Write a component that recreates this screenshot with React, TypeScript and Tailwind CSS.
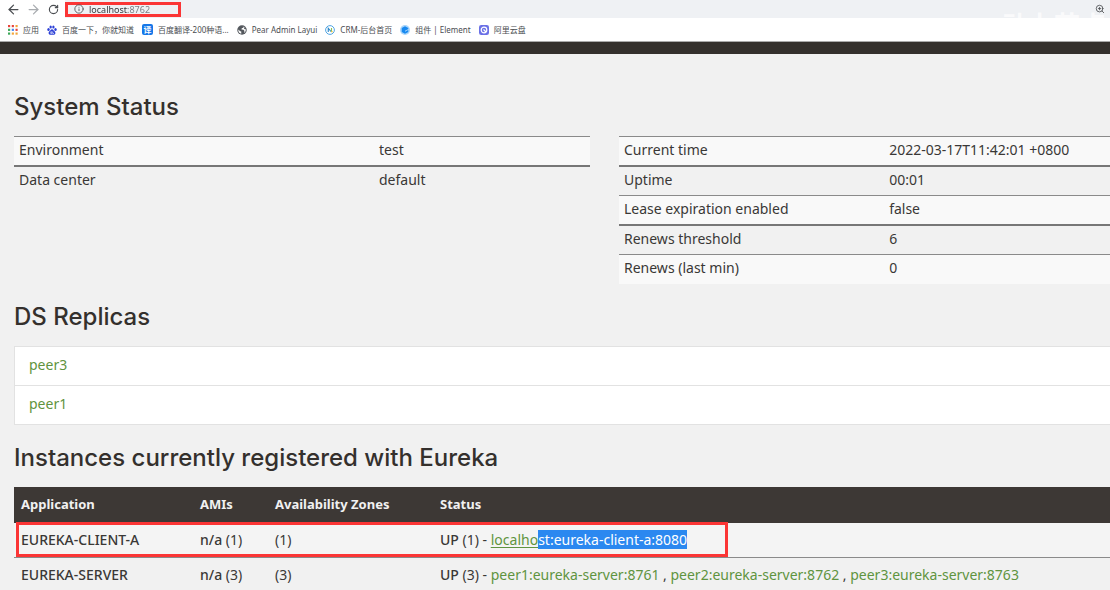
import React from 'react';
import { ArrowLeft, ArrowRight, Info, RotateCw, ZoomIn } from 'lucide-react';

interface Bookmark {
  label: string;
  icon: React.ReactNode;
}

interface Instance {
  app: string;
  count: number;
  status: React.ReactNode;
}

const AppsIcon = () => (
  <svg viewBox="0 0 12 12" className="size-2.5" aria-hidden="true">
    {[
      ['#e8453c', '#e8453c', '#f2a43a'],
      ['#3aa757', '#4285f4', '#e8453c'],
      ['#3aa757', '#f2a43a', '#f2a43a'],
    ].map((row, y) =>
      row.map((fill, x) => (
        <rect key={`${x}-${y}`} x={x * 4.5} y={y * 4.5} width="2.6" height="2.6" fill={fill} />
      ))
    )}
  </svg>
);

const PawIcon = () => (
  <svg viewBox="0 0 20 20" className="size-2.5" fill="#2b3fd6" aria-hidden="true">
    <ellipse cx="3" cy="9" rx="2.4" ry="3" />
    <ellipse cx="7.3" cy="4" rx="2.3" ry="3.2" />
    <ellipse cx="12.8" cy="4" rx="2.3" ry="3.2" />
    <ellipse cx="17" cy="9" rx="2.4" ry="3" />
    <path d="M10 8.5c-2.5 0-3.2 2.6-5 4.2-1.700 1.500-2.200 3-1.500 4.700 1 2.600 3.700 1.900 6.500 1.900s5.500.7 6.500-1.900c.7-1.700.2-3.200-1.500-4.700-1.800-1.600-2.500-4.200-5-4.200z" />
    <path d="M7.500 13.500h2v3.500h-2zM11.500 13v4h2.500" fill="none" stroke="#fff" strokeWidth="1.200" />
  </svg>
);

const TranslateIcon = () => (
  <span className="flex size-[11px] items-center justify-center rounded-xs bg-[#1677e8] text-[8px] leading-none font-bold text-white">
    译
  </span>
);

const GlobeIcon = () => (
  <svg viewBox="0 0 20 20" className="size-2.5" aria-hidden="true">
    <circle cx="10" cy="10" r="9.500" fill="#54585d" />
    <path d="M2.500 9l4 3.500 2 .5v4.500C5 17 2.500 14 2.500 9zM10 2.500l3.500.8-1 2.200-3 1-.5 2.500 4 .5 2 2.500-1 4c2.500-1.500 4-4 3.500-7.500L14 8l1-3.500" fill="#fff" />
  </svg>
);

const CrmIcon = () => (
  <svg viewBox="0 0 20 20" className="size-2.5" aria-hidden="true">
    <circle cx="10" cy="10" r="8.800" fill="#fff" stroke="#3d9be0" strokeWidth="1.800" />
    <path d="M6.500 14V6.500l6 7" fill="none" stroke="#2b87c8" strokeWidth="2.200" />
    <path d="M13 6v7.500" stroke="#8cc152" strokeWidth="2.200" />
    <circle cx="14" cy="13.500" r="1.600" fill="#f4c542" />
  </svg>
);

const ElementIcon = () => (
  <svg viewBox="0 0 20 20" className="size-2.5" aria-hidden="true">
    <circle cx="10" cy="10" r="10" fill="#a9d5fb" />
    <path d="M10 2.500l6.500 3.700v2L10 11.500v2l6.500-3.300v3.600L10 17.500l-6.500-3.700V6.200z" fill="#1789f0" />
  </svg>
);

const DriveIcon = () => (
  <svg viewBox="0 0 20 20" className="size-2.5" aria-hidden="true">
    <rect width="20" height="20" rx="4.500" fill="#6a70e6" />
    <circle cx="10" cy="10" r="5.600" fill="none" stroke="#fff" strokeWidth="2.400" />
    <path d="M9 9l5 5" stroke="#fff" strokeWidth="2.400" />
  </svg>
);

const bookmarks: Bookmark[] = [
  { label: '应用', icon: <AppsIcon /> },
  { label: '百度一下，你就知道', icon: <PawIcon /> },
  { label: '百度翻译-200种语...', icon: <TranslateIcon /> },
  { label: 'Pear Admin Layui', icon: <GlobeIcon /> },
  { label: 'CRM-后台首页', icon: <CrmIcon /> },
  { label: '组件 | Element', icon: <ElementIcon /> },
  { label: '阿里云盘', icon: <DriveIcon /> },
];

const environment = [
  ['Environment', 'test'],
  ['Data center', 'default'],
];

const runtime = [
  ['Current time', '2022-03-17T11:42:01 +0800'],
  ['Uptime', '00:01'],
  ['Lease expiration enabled', 'false'],
  ['Renews threshold', '6'],
  ['Renews (last min)', '0'],
];

const replicas = ['peer3', 'peer1'];

const servers = ['peer1:eureka-server:8761', 'peer2:eureka-server:8762', 'peer3:eureka-server:8763'];

const instances: Instance[] = [
  {
    app: 'EUREKA-CLIENT-A',
    count: 1,
    status: (
      <a href="#client-a" className="text-[#5f9440] underline underline-offset-2">
        localho
        <mark className="inline-block bg-[#2b88f0] leading-[19px] text-white">st:eureka-client-a:8080</mark>
      </a>
    ),
  },
  {
    app: 'EUREKA-SERVER',
    count: 3,
    status: servers.map((name, i) => (
      <React.Fragment key={name}>
        {i > 0 && ' , '}
        <a href={`#${name}`} className="text-[#5f9440]">
          {name}
        </a>
      </React.Fragment>
    )),
  },
];

const BrowserBar = () => (
  <header className="relative bg-white font-['Noto_Sans','Noto_Sans_CJK_SC',sans-serif] text-[#4a4d51]">
    <div className="flex h-[18px] items-center">
      <div className="flex w-[65px] items-center gap-[5px] pl-1.5">
        <button type="button" aria-label="Back" className="flex size-[15px] items-center justify-center">
          <ArrowLeft size={15} />
        </button>
        <button type="button" aria-label="Forward" className="flex size-[15px] items-center justify-center text-[#a9acb0]">
          <ArrowRight size={15} />
        </button>
        <button type="button" aria-label="Reload" className="flex size-[15px] items-center justify-center">
          <RotateCw size={11} strokeWidth={2.5} />
        </button>
      </div>
      <div className="flex h-full flex-1 items-center justify-between bg-[#eff1f4] pr-[5px]">
        <label className="flex h-[15px] w-[116px] items-center gap-[5px] border-[3px] border-[#fb3535] pl-1.5">
          <Info size={10} aria-label="Site information" />
          <input
            type="text"
            aria-label="Address"
            defaultValue="localhost:8762"
            className="w-20 bg-[linear-gradient(90deg,#303236_39px,#777b80_39px)] bg-clip-text text-[9px] leading-none text-transparent outline-none"
          />
        </label>
        <button type="button" aria-label="Zoom">
          <ZoomIn size={10} />
        </button>
      </div>
    </div>
    <nav className="flex h-6 items-center gap-2 border-b border-[#aaa] pl-2 text-[8px]" aria-label="Bookmarks">
      {bookmarks.map(({ label, icon }) => (
        <a key={label} href="#bookmark" className="flex items-center gap-[5px] whitespace-nowrap">
          {icon}
          {label}
        </a>
      ))}
    </nav>
    <span className="pointer-events-none absolute top-3 right-1 text-[26px] leading-none font-bold whitespace-nowrap text-white/70">
      动力节点
    </span>
  </header>
);

const StatusTable = ({ rows, labelWidth }: { rows: string[][]; labelWidth: string }) => (
  <table className="w-full table-fixed self-start text-left">
    <tbody>
      {rows.map(([label, value]) => (
        <tr key={label} className="h-[29px] border-t border-[#8a8a8a] odd:bg-[#f9f9f9] even:h-[30px] even:border-t-2 even:border-[#777]">
          <th scope="row" className={`${labelWidth} pb-0.5 pl-[5px] font-normal`}>
            {label}
          </th>
          <td className="pb-0.5 pl-[5px]">{value}</td>
        </tr>
      ))}
    </tbody>
  </table>
);

const Heading = ({ children }: { children: React.ReactNode }) => (
  <h1 className="mb-[15px] font-['Inter',sans-serif] text-2xl leading-7 font-medium whitespace-nowrap text-[#34302d]">{children}</h1>
);

export default function App() {
  return (
    <div className="min-h-screen overflow-hidden bg-[#f1f1f1] font-['Noto_Sans',sans-serif] text-sm leading-5 text-[#3a3836]">
      <BrowserBar />
      <div className="h-3 bg-[#34302d]" />

      <main className="pl-3.5">
        <section className="pt-[39px]">
          <Heading>System Status</Heading>
          <div className="grid grid-cols-[576fr_491fr] gap-x-[29px]">
            <StatusTable rows={environment} labelWidth="w-5/8" />
            <StatusTable rows={runtime} labelWidth="w-[54%]" />
          </div>
        </section>

        <section className="mt-[19px]">
          <Heading>DS Replicas</Heading>
          <ul className="border-b border-l border-[#e2e2e2] bg-white">
            {replicas.map((name) => (
              <li key={name} className="border-t border-[#e2e2e2] pt-2 pb-2.5 pl-3.5">
                <a href={`#${name}`} className="text-[#5f9440]">
                  {name}
                </a>
              </li>
            ))}
          </ul>
        </section>

        <section className="mt-[19px]">
          <Heading>Instances currently registered with Eureka</Heading>
          <div className="relative">
            <table className="w-full table-fixed text-left whitespace-nowrap">
              <thead className="bg-[#3d3835] text-[13px] text-[#f1f1f1]">
                <tr className="h-9">
                  <th className="w-[179px] pb-0.5 pl-[7px]">Application</th>
                  <th className="w-[75px] pb-0.5 pl-[7px]">AMIs</th>
                  <th className="w-[165px] pb-0.5 pl-[7px]">Availability Zones</th>
                  <th className="pb-0.5 pl-[7px]">Status</th>
                </tr>
              </thead>
              <tbody>
                {instances.map(({ app, count, status }) => (
                  <tr key={app} className="h-[35px] border-b border-[#8a8a8a] odd:bg-[#f4f4f4]">
                    <td className="pl-[7px] font-medium">{app}</td>
                    <td className="pl-[7px]">
                      <b className="font-medium">n/a</b> ({count})
                    </td>
                    <td className="pl-[7px]">({count})</td>
                    <td className="pl-[7px]">
                      <b className="font-medium">UP</b> ({count}) - {status}
                    </td>
                  </tr>
                ))}
              </tbody>
            </table>
            <div className="pointer-events-none absolute top-[35px] left-0.5 h-[35px] w-[712px] border-[3px] border-[#fb3535]" />
          </div>
        </section>
      </main>
    </div>
  );
}
